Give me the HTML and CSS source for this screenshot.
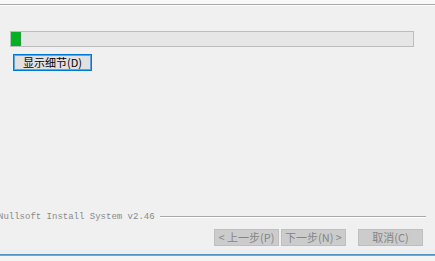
FILE: index.html
```html
<!DOCTYPE html>
<html>
<head>
<meta charset="utf-8">
<link rel="stylesheet" href="styles.css">
</head>
<body>
<div class="window">
  <div class="topbar"></div>
  <div class="topline"></div>
  <div class="main">
    <div class="progress"><div class="fill"></div></div>
    <button class="details-btn">显示细节(D)</button>
  </div>
  <div class="footer">
    <div class="brand">
      <span class="brand-text">Nullsoft Install System v2.46</span>
      <span class="etched"></span>
    </div>
    <div class="buttons">
      <button class="btn" disabled>&lt;&nbsp;上一步(P)</button>
      <button class="btn" disabled>下一步(N)&nbsp;&gt;</button>
      <button class="btn cancel" disabled>取消(C)</button>
    </div>
    <div class="tint"></div>
    <div class="blueline"></div>
    <div class="bottom"></div>
  </div>
</div>
</body>
</html>
```
FILE: styles.css
```css
html, body {
  margin: 0;
  padding: 0;
  background: #f0f0f0;
}
.window {
  width: 435px;
  height: 261px;
  display: flex;
  flex-direction: column;
  overflow: hidden;
  font-family: "Noto Sans CJK SC", "Liberation Sans", sans-serif;
}
.topbar {
  height: 4px;
  background: #f8f8f8;
  border-bottom: 1px solid #a9a9a9;
}
.topline {
  height: 1px;
  background: #fcfcfc;
}
.main {
  flex: 1;
  padding: 25px 0 0 10px;
  display: flex;
  flex-direction: column;
  align-items: flex-start;
}
.progress {
  width: 402px;
  height: 14px;
  border: 1px solid #bcbcbc;
  background: #e6e6e6;
}
.fill {
  width: 10px;
  height: 14px;
  background: #06b025;
}
.details-btn {
  margin: 7px 0 0 3px;
  width: 79px;
  height: 17px;
  box-sizing: border-box;
  border: 1px solid #0078d7;
  box-shadow: inset 0 0 0 1px #5aa6e4;
  background: #e1e1e1;
  color: #000;
  font-family: "Noto Sans CJK SC", sans-serif;
  font-size: 11px;
  line-height: 13px;
  padding: 0;
}
.footer {
  display: flex;
  flex-direction: column;
}
.brand {
  height: 12px;
  display: flex;
  align-items: center;
  margin-left: -2px;
  margin-bottom: 6px;
}
.brand-text {
  font-family: "Liberation Mono", monospace;
  font-size: 9px;
  color: #8a8a8a;
  white-space: nowrap;
}
.etched {
  flex: 1;
  height: 0;
  border-top: 1px solid #a8a8a8;
  border-bottom: 1px solid #ffffff;
  margin: 0 9px 0 5px;
}
.buttons {
  display: flex;
  justify-content: flex-end;
  gap: 2px;
  padding-right: 12px;
  margin-bottom: 3px;
}
.btn {
  width: 65px;
  height: 17px;
  box-sizing: border-box;
  border: 1px solid #bfbfbf;
  background: #cccccc;
  color: #858585;
  font-family: "Noto Sans CJK SC", sans-serif;
  font-size: 11px;
  line-height: 13px;
  padding: 0;
}
.cancel {
  margin-left: 10px;
}
.tint {
  height: 5px;
  background: linear-gradient(#f3eeeb, #eaf0f5, #f3ece8, #e9eff4);
}
.blueline {
  height: 2px;
  background: linear-gradient(#3f8cc0, #7db3d8);
}
.bottom {
  height: 5px;
  background: #f4f4f4;
}
```
